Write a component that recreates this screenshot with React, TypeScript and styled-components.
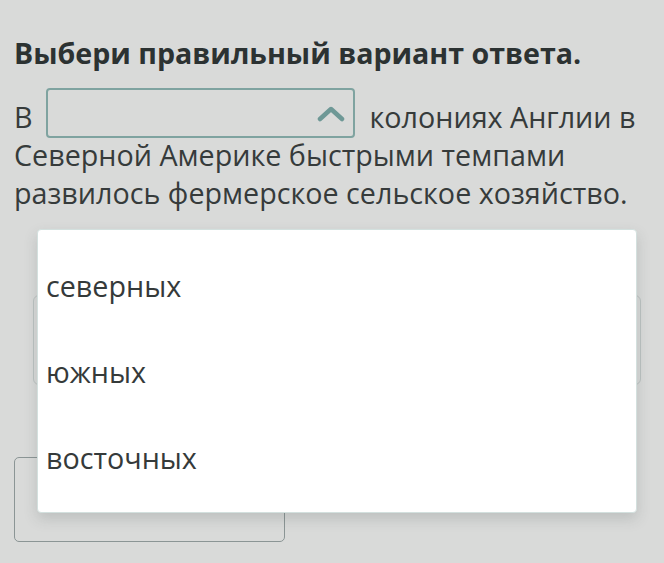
import styled, { createGlobalStyle } from "styled-components";

const GlobalStyle = createGlobalStyle`
    body {
        margin: 0;
        background: #d9dad9;
        font-family: "Open Sans", "Noto Sans", sans-serif;
        color: #333838;
    }
`;

const Page = styled.div`
    position: relative;
    height: 563px;
    padding: 34px 14px 0;
    box-sizing: border-box;
    overflow: hidden;
`;

const Title = styled.h2`
    margin: 0;
    font-size: 28.6px;
    line-height: 38px;
    font-weight: 700;
    color: #2c3232;
`;

const Sentence = styled.p`
    margin: 26px 0 0;
    font-size: 28.7px;
    line-height: 38px;
    color: #363b3b;
`;

const Select = styled.span`
    display: inline-flex;
    align-items: center;
    justify-content: flex-end;
    vertical-align: top;
    box-sizing: border-box;
    width: 309px;
    height: 50px;
    margin: -10px 15px -2px 13px;
    padding-right: 8px;
    border: 2.5px solid #7fa3a0;
    border-radius: 4px;
    color: #6e9896;
`;

const AnswerCard = styled.div`
    margin: 83px 0 0 19px;
    width: 608px;
    height: 90px;
    box-sizing: border-box;
    border: 1.5px solid #bcc2c1;
    border-radius: 6px;
`;

const CheckButton = styled.div`
    margin-top: 72px;
    width: 271px;
    height: 85px;
    box-sizing: border-box;
    border: 1.5px solid #8b9595;
    border-radius: 5px;
`;

const Menu = styled.ul`
    position: absolute;
    top: 229px;
    left: 37px;
    width: 600px;
    height: 284px;
    box-sizing: border-box;
    margin: 0;
    padding: 13px 0;
    list-style: none;
    background: #ffffff;
    border: 1px solid #d3e0de;
    border-radius: 4px;
    box-shadow: 0 6px 14px rgba(60, 70, 70, 0.18);
`;

const Option = styled.li`
    height: 86px;
    padding-left: 8px;
    font-size: 28.7px;
    line-height: 86px;
    color: #353a3a;
    cursor: pointer;
`;

const Chevron = () => (
    <svg width="28" height="17" viewBox="0 0 28 17">
        <polyline
            points="3,14 14,4 25,14"
            fill="none"
            stroke="currentColor"
            strokeWidth="4.5"
            strokeLinecap="round"
            strokeLinejoin="round"
        />
    </svg>
);

const options = ["северных", "южных", "восточных"];

const App = () => {
    return (
        <>
            <GlobalStyle />
            <Page>
                <Title>Выбери правильный вариант ответа.</Title>
                <Sentence>
                    <span>В</span>
                    <Select>
                        <Chevron />
                    </Select>
                    <span>колониях Англии в</span>{" "}
                    <span>
                        Северной Америке быстрыми темпами развилось фермерское
                        сельское хозяйство.
                    </span>
                </Sentence>
                <AnswerCard />
                <CheckButton />
                <Menu>
                    {options.map((opt) => (
                        <Option key={opt}>{opt}</Option>
                    ))}
                </Menu>
            </Page>
        </>
    );
};

export default App;
